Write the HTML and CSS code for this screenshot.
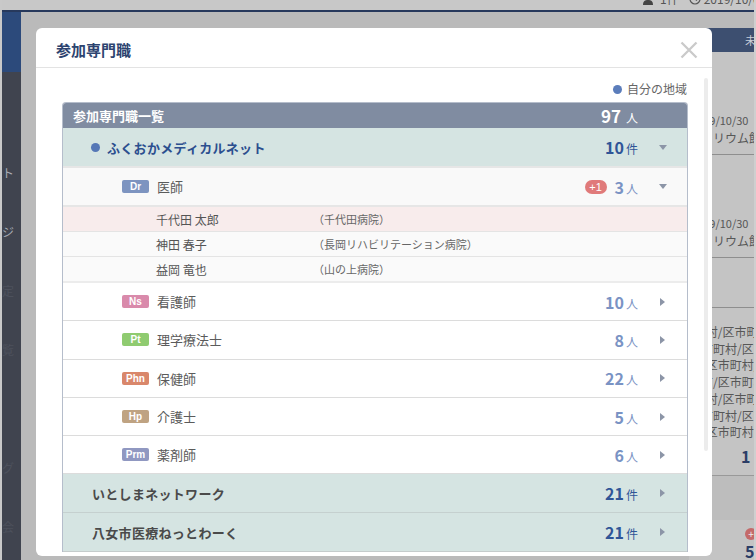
FILE: index.html
```html
<!DOCTYPE html>
<html lang="ja">
<head>
<meta charset="utf-8">
<title>参加専門職</title>
<link rel="stylesheet" href="styles.css">
</head>
<body>
<div class="app">
  <header class="topbar">
    <span class="tb-item"><svg class="tb-icon" width="14" height="12" viewBox="0 0 14 12"><circle cx="5" cy="4" r="3" fill="#444"/><path d="M0 12c0-4 2-5 5-5s5 1 5 5z" fill="#444"/></svg>1件</span>
    <span class="tb-item"><svg class="tb-icon" width="12" height="12" viewBox="0 0 12 12"><circle cx="6" cy="6" r="5" fill="none" stroke="#555" stroke-width="1.2"/><path d="M6 3v3l2 1.5" fill="none" stroke="#555" stroke-width="1.2"/></svg>2019/10/09 10:00</span>
  </header>
  <div class="app-body">
    <nav class="sidebar">
      <div class="side-brand"></div>
      <ul class="side-list">
        <li class="side-item"></li>
        <li class="side-item bright">チャット</li>
        <li class="side-item bright">マイページ</li>
        <li class="side-item">設定</li>
        <li class="side-item">一覧</li>
        <li class="side-item"></li>
        <li class="side-item">ブログ</li>
        <li class="side-item">協議会</li>
      </ul>
    </nav>
    <main class="main">
      <section class="panel">
        <div class="panel-head">未読</div>
        <div class="p-row tall"><span>2019/10/30</span><span>ネタリウム館</span></div>
        <div class="p-row tall"><span>2019/10/30</span><span>ネタリウム館</span></div>
        <div class="p-row short"></div>
        <div class="p-row area">
          <span>/町村/区市町村</span>
          <span>区市町村/区市町村</span>
          <span>村/区市町村/</span>
          <span>区市/区市町村</span>
          <span>/町村/区市町村</span>
          <span>区市町村/区市</span>
          <span>村/区市町村</span>
          <b class="p-num">1</b>
        </div>
        <div class="p-row band"></div>
        <div class="p-row last"><span class="p-plus">+</span><b class="p-num">5</b></div>
      </section>
    </main>
  </div>
</div>

<div class="modal">
  <div class="modal-header">
    <h2 class="modal-title">参加専門職</h2>
    <button class="close" type="button" aria-label="閉じる">
      <svg width="18" height="18" viewBox="0 0 18 18"><path d="M1.5 1.5L16.5 16.5M16.5 1.5L1.5 16.5" stroke="#cacaca" stroke-width="2.3" fill="none"/></svg>
    </button>
  </div>
  <div class="modal-body">
    <div class="legend"><span class="dot"></span>自分の地域</div>
    <div class="list">
      <div class="row list-head">
        <span class="label">参加専門職一覧</span>
        <span class="count"><b>97</b><span class="unit wide">人</span></span>
        <span class="arrow"></span>
      </div>

      <div class="row group own">
        <span class="label"><span class="dot"></span>ふくおかメディカルネット</span>
        <span class="count"><b>10</b><span class="unit">件</span></span>
        <span class="arrow"><i class="tri-down"></i></span>
      </div>

      <div class="row prof open">
        <span class="label"><span class="badge dr">Dr</span>医師</span>
        <span class="plus">+1</span>
        <span class="count"><b>3</b><span class="unit">人</span></span>
        <span class="arrow"><i class="tri-down"></i></span>
      </div>
      <div class="members">
        <div class="member new"><span class="name">千代田 太郎</span><span class="org">（千代田病院）</span></div>
        <div class="member"><span class="name">神田 春子</span><span class="org">（長岡リハビリテーション病院）</span></div>
        <div class="member"><span class="name">益岡 竜也</span><span class="org">（山の上病院）</span></div>
      </div>

      <div class="row prof">
        <span class="label"><span class="badge ns">Ns</span>看護師</span>
        <span class="count"><b>10</b><span class="unit">人</span></span>
        <span class="arrow"><i class="tri-right"></i></span>
      </div>
      <div class="row prof">
        <span class="label"><span class="badge pt">Pt</span>理学療法士</span>
        <span class="count"><b>8</b><span class="unit">人</span></span>
        <span class="arrow"><i class="tri-right"></i></span>
      </div>
      <div class="row prof">
        <span class="label"><span class="badge phn">Phn</span>保健師</span>
        <span class="count"><b>22</b><span class="unit">人</span></span>
        <span class="arrow"><i class="tri-right"></i></span>
      </div>
      <div class="row prof">
        <span class="label"><span class="badge hp">Hp</span>介護士</span>
        <span class="count"><b>5</b><span class="unit">人</span></span>
        <span class="arrow"><i class="tri-right"></i></span>
      </div>
      <div class="row prof">
        <span class="label"><span class="badge prm">Prm</span>薬剤師</span>
        <span class="count"><b>6</b><span class="unit">人</span></span>
        <span class="arrow"><i class="tri-right"></i></span>
      </div>

      <div class="row group">
        <span class="label">いとしまネットワーク</span>
        <span class="count"><b>21</b><span class="unit">件</span></span>
        <span class="arrow"><i class="tri-right"></i></span>
      </div>
      <div class="row group">
        <span class="label">八女市医療ねっとわーく</span>
        <span class="count"><b>21</b><span class="unit">件</span></span>
        <span class="arrow"><i class="tri-right"></i></span>
      </div>
    </div>
    <div class="scroll-thumb"></div>
  </div>
</div>
</body>
</html>
```

FILE: styles.css
```css
html, body {
  margin: 0;
  padding: 0;
}
body {
  position: relative;
  width: 756px;
  height: 560px;
  overflow: hidden;
  background: #bdbdbd;
  font-family: "Noto Sans CJK JP", "Noto Sans", sans-serif;
}

/* ---------- background application (dimmed) ---------- */
.app {
  width: 756px;
  height: 560px;
  box-sizing: border-box;
  border-left: 2px solid #c9c9c9;
  border-right: 2px solid #cfcfcf;
  background: #bababa;
  display: flex;
  flex-direction: column;
  overflow: hidden;
}
.topbar {
  flex: none;
  height: 10px;
  border-bottom: 2px solid #27395c;
  background: #c8c8c8;
  display: flex;
  align-items: flex-end;
  gap: 10px;
  padding-left: 641px;
  overflow: hidden;
  white-space: nowrap;
}
.tb-item {
  display: flex;
  align-items: center;
  gap: 3px;
  font-size: 12px;
  line-height: 22px;
  color: #555;
}
.app-body {
  flex: 1;
  min-height: 0;
  display: flex;
}
.sidebar {
  width: 19px;
  flex: none;
  background: #40444f;
  overflow: hidden;
}
.side-brand {
  height: 60px;
  background: #2c4a7b;
}
.side-list {
  list-style: none;
  margin: 0;
  padding: 12px 0 0;
}
.side-item {
  height: 59px;
  display: flex;
  justify-content: flex-end;
  align-items: center;
  padding-right: 7px;
  white-space: nowrap;
  font-size: 12px;
  color: #4d515c;
}
.side-item.bright {
  color: #a9adb6;
}
.main {
  flex: 1;
  display: flex;
  justify-content: flex-end;
  padding-top: 16px;
}
.panel {
  width: 65px;
  background: #c4c4c4;
  display: flex;
  flex-direction: column;
  overflow: hidden;
  white-space: nowrap;
  font-size: 12px;
  color: #575757;
}
.panel-head {
  height: 24px;
  flex: none;
  background: #3d4f70;
  color: #c9ced8;
  font-size: 11px;
  line-height: 24px;
  padding-left: 56px;
}
.p-row {
  display: flex;
  flex-direction: column;
  border-bottom: 1px solid #8e8e8e;
  flex: none;
}
.p-row.tall {
  height: 101px;
  justify-content: flex-end;
  padding-bottom: 1px;
  line-height: 17px;
}
.p-row.tall span:first-child {
  font-size: 11px;
  text-indent: 2px;
}
.p-row.tall span:last-child {
  margin-bottom: 7px;
}
.p-row.short {
  height: 49px;
}
.p-row.area {
  height: 151px;
  padding-top: 16px;
  line-height: 16.7px;
  border-bottom-color: #999;
}
.p-num {
  color: #2b3d66;
  font-size: 16px;
  line-height: 18px;
  padding-left: 52px;
  margin-top: 6px;
}
.p-row.band {
  height: 44px;
  background: #bdbdbd;
  border-bottom: none;
}
.p-row.last {
  flex: 1;
  padding-left: 56px;
  padding-top: 8px;
}
.p-plus {
  width: 12px;
  height: 12px;
  border-radius: 50%;
  background: #c46a6a;
  color: #eee;
  font-size: 10px;
  line-height: 12px;
  text-align: center;
}
.p-row.last .p-num {
  padding-left: 0;
  margin-top: 2px;
}

/* ---------- modal ---------- */
.modal {
  position: absolute;
  left: 36px;
  top: 28px;
  width: 676px;
  height: 528px;
  background: #fff;
  border-radius: 6px;
  overflow: hidden;
  display: flex;
  flex-direction: column;
}
.modal-header {
  flex: none;
  height: 40px;
  box-sizing: border-box;
  padding: 4px 14px 0 20px;
  display: flex;
  align-items: center;
  justify-content: space-between;
  border-bottom: 1px solid #e3e3e3;
}
.modal-title {
  margin: 0;
  font-size: 15px;
  font-weight: 700;
  color: #2d4470;
  line-height: 20px;
}
.close {
  border: 0;
  background: none;
  padding: 0;
  width: 18px;
  height: 18px;
  display: flex;
}
.modal-body {
  flex: 1;
  min-height: 0;
  position: relative;
  overflow: hidden;
  padding: 13px 24px 0 26px;
}
.legend {
  display: flex;
  justify-content: flex-end;
  align-items: center;
  gap: 5px;
  font-size: 12px;
  line-height: 16px;
  color: #666;
  margin-bottom: 5px;
  padding-right: 1px;
}
.dot {
  width: 9px;
  height: 9px;
  border-radius: 50%;
  background: #5b7dbb;
  flex: none;
}
.scroll-thumb {
  position: absolute;
  top: 10px;
  right: 4px;
  width: 4px;
  height: 373px;
  border-radius: 2px;
  background: #ececec;
}

.list {
  border: 1px solid #b5bdcb;
  border-bottom: 0;
  border-radius: 4px 4px 0 0;
  overflow: hidden;
}
.row {
  display: flex;
  align-items: center;
}
.label {
  flex: 1;
  min-width: 0;
  display: flex;
  align-items: center;
  white-space: nowrap;
}
.count {
  display: flex;
  align-items: baseline;
  white-space: nowrap;
}
.count b {
  font-size: 16px;
  font-weight: 700;
}
.unit {
  font-size: 12px;
  margin-left: 2px;
}
.unit.wide {
  margin-left: 5px;
}
.arrow {
  width: 49px;
  flex: none;
  display: flex;
  justify-content: center;
  align-items: center;
}
.tri-down {
  width: 0;
  height: 0;
  border-left: 4px solid transparent;
  border-right: 4px solid transparent;
  border-top: 5px solid #8c95a7;
}
.tri-right {
  width: 0;
  height: 0;
  border-top: 4px solid transparent;
  border-bottom: 4px solid transparent;
  border-left: 5px solid #8c95a7;
}

.list-head {
  height: 25px;
  background: #808ca1;
  color: #fff;
  padding-left: 10px;
}
.list-head .label {
  font-size: 13px;
  font-weight: 700;
}
.list-head .count b {
  font-size: 17px;
}

.group {
  height: 38px;
  background: #d5e4e2;
  padding-left: 29px;
}
.group .label {
  font-size: 13px;
  font-weight: 700;
  color: #4a4a4a;
  letter-spacing: 0.3px;
}
.group.own {
  padding-left: 28px;
}
.group.own .label {
  color: #2c4f8f;
}
.group.own .dot {
  margin-right: 7px;
  background: #5577b6;
}
.group .count {
  color: #2f5597;
}
.group + .group {
  border-top: 1px solid #c5d0cf;
}
.group:last-child {
  border-bottom: 1px solid #c5cccc;
}

.prof {
  height: 37.3px;
  padding-left: 59px;
  background: #fff;
  border-bottom: 1px solid #dcdcdc;
}
.prof.open {
  height: 37px;
  background: #f9f9f9;
  border-top: 2px solid #e6e6e6;
  border-bottom: 2px solid #e6e6e6;
}
.prof .label {
  font-size: 13px;
  color: #5b5b5b;
}
.prof .count {
  color: #7a93c4;
}
.badge {
  width: 27px;
  height: 13px;
  border-radius: 2px;
  margin-right: 8px;
  display: flex;
  align-items: center;
  justify-content: center;
  font-family: "Liberation Sans", "Noto Sans", sans-serif;
  font-size: 10px;
  font-weight: 700;
  color: #fff;
  flex: none;
}
.badge.dr { background: #7d94c0; }
.badge.ns { background: #d98aab; }
.badge.pt { background: #8fcb70; }
.badge.phn { background: #d9876b; }
.badge.hp { background: #bfa382; }
.badge.prm { background: #9098c1; }
.plus {
  width: 22px;
  height: 14px;
  border-radius: 7px;
  background: #e07a7a;
  color: #fff;
  font-family: "Liberation Sans", "Noto Sans", sans-serif;
  font-size: 11px;
  line-height: 14px;
  text-align: center;
  margin-right: 8px;
}

.members {
  display: flex;
  flex-direction: column;
}
.member {
  height: 24px;
  display: flex;
  align-items: center;
  padding-left: 93px;
  background: #fafafa;
  border-bottom: 1px solid #e4e4e4;
  white-space: nowrap;
}
.member.new {
  background: #f8ecec;
}
.member:last-child {
  border-bottom: 2px solid #ececec;
}
.name {
  width: 157px;
  font-size: 12px;
  color: #555;
}
.org {
  font-size: 11px;
  color: #666;
}
```
